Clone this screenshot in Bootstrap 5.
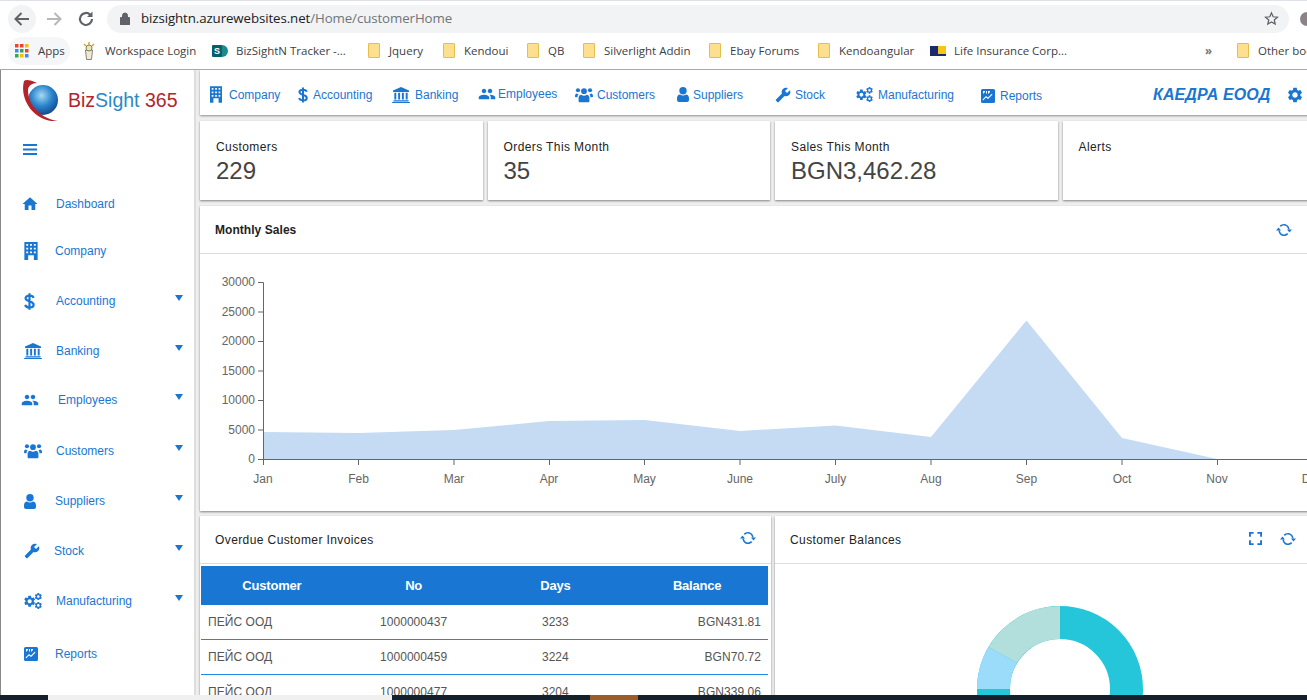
<!DOCTYPE html>
<html lang="en"><head><meta charset="utf-8"><title>BizSight 365</title>
<link href="https://cdn.jsdelivr.net/npm/bootstrap@5.3.0/dist/css/bootstrap.min.css" rel="stylesheet">
<style>
html,body{height:700px;overflow:hidden;background:#eee;font-family:"Liberation Sans",Arial,sans-serif;font-size:12px;color:#333}
.chrome-top{height:36px;background:#fff;padding-left:8px;border-top:1px solid #dee1e6;font-family:"Open Sans",sans-serif;color:#3c4043;overflow:hidden}
.back-btn{width:28px;height:28px;margin-right:7px;flex:none}
.fwd-btn{width:22px;height:22px;margin-right:10px;flex:none}
.reload-btn{width:22px;height:22px;margin-right:10px;flex:none}
.omni{width:1182px;flex:none;height:28px;border-radius:14px;background:#f1f3f4;padding-left:13px;font-size:13.3px;color:#70757a;letter-spacing:-.1px}
.omni b{font-weight:400;color:#202124}
.omni-txt{margin-left:11px}
.star-ic{margin-left:auto;margin-right:10px}
.avatar-dot{width:14px;height:14px;border-radius:50%;background:#8d8288;flex:none;margin-left:11px}
.chrome-marks{height:34px;background:#fff;border-bottom:1px solid #a8a8a8;padding:0 0 4px 8px;font-family:"Open Sans",sans-serif;font-size:11.5px;color:#3c4043;white-space:nowrap;overflow:hidden}
.apps-pill{width:62px;height:28px;margin-right:12px;flex:none;border-radius:14px;background:#f5f6f7;padding-left:7px;gap:9px}
.mark-it{display:flex;align-items:center;gap:9px;flex:none}
.mk-ws{width:130px;gap:9px}.mk-bz{width:156px;gap:8px}.mk-jq{width:75px}.mk-ke{width:84px}.mk-qb{width:56px}.mk-si{width:126px}.mk-eb{width:109px}.mk-ka{width:112px}.mk-li{width:275px;gap:8px}
.more-mk{width:32px;font-weight:700;color:#777;flex:none}
.fold{width:12px;height:15px;background:#fce08e;border:1px solid #e8bd4f;border-radius:1px;flex:none}
.app-shell{height:625px;overflow:hidden}
.side-rail{width:196px;flex:none;background:#fff;border-left:1px solid #888;border-right:2px solid #ddd;height:625px}
.logo-box{height:65px;padding:8px 0 0 19px}
.logo-txt{font-size:19.5px;margin-left:4px;color:#b5232b;margin-top:10px;line-height:24px;white-space:nowrap}
.logo-txt i{font-style:normal;color:#2a8ac6}
.burger{height:44px;padding-left:22px;padding-top:9px}
.burger svg{display:block}
.side-it{display:flex;align-items:center;color:#1976d2;text-decoration:none;padding-left:21px}
.side-it svg{fill:#1976d2;color:#1976d2}
.ico-slot{width:33px;flex:none;display:flex;align-items:center}
.ic-in{margin-left:2px}
.ic-out{margin-left:-1px}
.tri{margin-left:auto;margin-right:11px;margin-bottom:6px;width:0;height:0;border-left:4px solid transparent;border-right:4px solid transparent;border-top:6px solid #1976d2}
.it-dash{height:50px}.it-comp{height:44px}.it-acc{height:56px}.it-bank{height:44px}.it-emp{height:54px}.it-cust{height:48px}.it-supp{height:52px}.it-stock{height:48px}.it-manu{height:52px}.it-rep{height:54px}
.it-dash .lab,.it-acc .lab,.it-manu .lab{margin-left:2px}
.it-dash .lab{margin-left:1px}
.it-acc .lab,.it-manu .lab{margin-left:1px}
.it-bank .lab,.it-cust .lab{margin-left:1px}
.it-emp .lab{margin-left:3px}
.it-stock .lab{margin-left:-1px}
.main-pane{width:1145px;flex:none;margin-left:4px;height:625px}
.top-strip{height:45px;background:#fff;box-shadow:0 1px 2px rgba(0,0,0,.4);margin-bottom:6px;padding:4px 0 0 10px;color:#1976d2}
.top-it{display:flex;align-items:center;flex:none;text-decoration:none;color:#1976d2;white-space:nowrap}
.top-it svg{fill:#1976d2;color:#1976d2;flex:none}
.tp-comp{width:88px}.tp-comp svg{margin-right:7px;width:12px;height:17px}
.tp-acc{width:94px}.tp-acc svg{margin-right:5px;width:10px;height:16px}
.tp-bank{width:86px}.tp-bank svg{margin-right:5px;width:18px;height:16px}
.tp-emp{width:97px;margin-top:-2px}.tp-emp svg{margin-right:2px;width:18px;height:18px}
.tp-cust{width:102px}.tp-cust svg{margin-right:4px;width:18px;height:16px}
.tp-supp{width:98px}.tp-supp svg{margin-right:4px;width:12px;height:15px}
.tp-stock{width:81px}.tp-stock svg{margin-right:4px;width:16px;height:16px}
.tp-manu{width:125px}.tp-manu svg{margin-right:5px;width:17px;height:15px}
.tp-rep{width:172px;margin-top:2px}.tp-rep svg{margin-right:5px;width:14px;height:14px}
.co-name{font-size:16px;font-weight:700;font-style:italic;color:#1976d2;letter-spacing:.1px;white-space:nowrap}
.co-cog{width:18px;height:18px;margin-left:16px;fill:#1976d2;flex:none}
.stat-row{display:flex;gap:5px;margin-bottom:6px}
.stat-box{flex:1 1 0;height:79px;border:0;border-radius:0;box-shadow:0 1px 2px rgba(0,0,0,.45);padding:19px 16px 0}
.stat-lab{font-size:12px;color:#222;letter-spacing:.4px;line-height:14px}
.stat-val{font-size:24px;color:#444;line-height:30px;margin-top:2px}
.pane{border:0;border-radius:0;box-shadow:0 1px 2px rgba(0,0,0,.45);background:#fff}
.pane-head{height:48px;border-bottom:1px solid #ddd;padding:0 15px;background:#fff;font-size:12px;letter-spacing:.4px;color:#222;white-space:nowrap}
.pane-head svg{fill:#1976d2;flex:none}
.sales-title{letter-spacing:.05px}
.sales-sync{margin-left:980px;width:16px;height:14px}
.inv-sync{margin-left:auto;margin-top:-4px;width:16px;height:14px}
.bal-full{margin-left:347px;margin-top:-2px;width:13px;height:13px}
.bal-sync{margin-left:18px;margin-top:-2px;width:16px;height:14px}
.sales-pane{height:305px;margin-bottom:5px}
.low-row{display:flex;gap:4px}
.inv-pane{width:571px;height:200px;padding:0}
.bal-pane{width:570px;height:200px;overflow:hidden}
.inv-grid{width:567px;margin:2px 0 0 1px;font-size:12px;table-layout:fixed;margin-bottom:0}
.inv-grid th{background:#1976d2;color:#fff;height:39px;border:0;padding:1px 0 0;text-align:center;vertical-align:middle;font-size:13px;font-weight:700;letter-spacing:-.2px}
.inv-grid td{height:35px;border:0;border-bottom:1px solid #1e88e5;padding:0 7px;vertical-align:middle;color:#555;text-align:center;letter-spacing:.05px}
.inv-grid tbody tr:first-child td{height:34px}
.inv-grid td:first-child{text-align:left}
.inv-grid td:last-child{text-align:right}
.chart-txt{font-family:"Liberation Sans",Arial,sans-serif;font-size:12px;fill:#666}
.foot-strip{height:5px;background:#f0f0f0}
.foot-a{width:48px;background:#14202b}.foot-b{width:344px;background:#f0f0f0}.foot-c{width:198px;background:#14202b}.foot-d{width:48px;background:#9a5c28}.foot-e{flex:1;background:#14202b}
</style></head><body>
<svg width="0" height="0" class="d-block">
<defs>
<symbol id="i-building" viewBox="0 0 14 19"><path fill-rule="evenodd" d="M0 0h14v19H0zM2 2v2h2V2zm4 0v2h2V2zm4 0v2h2V2zM2 6v2h2V6zm4 0v2h2V6zm4 0v2h2V6zM2 10v2h2v-2zm4 0v2h2v-2zm4 0v2h2v-2zM4 14v5h6v-5z"/></symbol>
<symbol id="i-dollar" viewBox="0 0 12 18"><path fill="none" stroke="currentColor" stroke-width="2.4" d="M10.500 5C10 3.300 8.500 2.600 6 2.600 3.300 2.600 1.700 3.800 1.700 5.500c0 4 8.800 2.500 8.800 7 0 1.800-1.800 3-4.500 3-2.600 0-4.200-1-4.700-2.800M6 0v18"/></symbol>
<symbol id="i-bank" viewBox="0 0 20 18"><path d="M10 0l9 4v1.500H1V4zM2.500 6.500h2.200V14H2.500zm4.300 0H9V14H6.800zm4.200 0h2.200V14H11zm4.300 0h2.200V14h-2.200zM1.500 15h17v1.200h-17zM0 16.800h20V18H0z"/></symbol>
<symbol id="i-people" viewBox="0 0 24 24"><path d="M16 11c1.660 0 2.990-1.340 2.990-3S17.660 5 16 5c-1.660 0-3 1.340-3 3s1.340 3 3 3zm-8 0c1.660 0 2.990-1.340 2.990-3S9.660 5 8 5C6.340 5 5 6.340 5 8s1.340 3 3 3zm0 2c-2.330 0-7 1.170-7 3.500V19h14v-2.500c0-2.330-4.670-3.500-7-3.500zm8 0c-.29 0-.62.02-.97.05 1.160.84 1.970 1.970 1.970 3.450V19h6v-2.500c0-2.330-4.670-3.500-7-3.500z"/></symbol>
<symbol id="i-users" viewBox="0 0 20 17"><circle cx="10" cy="4.200" r="3.200"/><circle cx="3.300" cy="3.200" r="2.300"/><circle cx="16.700" cy="3.200" r="2.300"/><path d="M5 16.500a1 1 0 0 1-1-1v-4c0-2 1.500-3.300 3-3.300 1 .8 2 1 3 1s2-.2 3-1c1.500 0 3 1.300 3 3.300v4a1 1 0 0 1-1 1zM0 10c0-2 .8-3.300 2-3.300.6.500 1.200.7 2 .7-.8 1-1.200 2-1.200 3.600H1a1 1 0 0 1-1-1zM20 10c0-2-.8-3.300-2-3.300-.6.500-1.200.7-2 .7.800 1 1.200 2 1.200 3.600H19a1 1 0 0 0 1-1z"/></symbol>
<symbol id="i-person" viewBox="0 0 12 15"><circle cx="6" cy="3.700" r="3.700"/><path d="M2 15a2 2 0 0 1-2-2v-1.500c0-2.500 1.300-4 3-4 .8.600 1.900 1 3 1s2.200-.4 3-1c1.700 0 3 1.500 3 4V13a2 2 0 0 1-2 2z"/></symbol>
<symbol id="i-wrench" viewBox="0 0 24 24"><g transform="matrix(-1 0 0 1 24 0)"><path d="M22.700 19l-9.100-9.100c.9-2.300.4-5-1.500-6.900-2-2-5-2.400-7.400-1.300L9 6 6 9 1.600 4.700C.4 7.100.9 10.100 2.900 12.100c1.900 1.900 4.600 2.400 6.900 1.500l9.100 9.100c.4.400 1 .4 1.400 0l2.300-2.300c.5-.4.500-1.100.1-1.400z"/></g></symbol>
<symbol id="i-cog" viewBox="0 0 24 24"><path d="M19.140 12.940c.04-.3.06-.61.06-.94 0-.32-.02-.64-.07-.94l2.030-1.580c.18-.14.23-.41.12-.61l-1.920-3.320c-.12-.22-.37-.29-.59-.22l-2.390.96c-.5-.38-1.030-.7-1.620-.94l-.36-2.540c-.04-.24-.24-.41-.48-.41h-3.840c-.24 0-.43.17-.47.41l-.36 2.540c-.59.24-1.130.57-1.620.94l-2.390-.96c-.22-.08-.47 0-.59.22L2.740 8.870c-.12.21-.08.47.12.61l2.030 1.580c-.05.3-.09.63-.09.94s.02.64.07.94l-2.030 1.580c-.18.14-.23.41-.12.61l1.920 3.320c.12.22.37.29.59.22l2.390-.96c.5.38 1.030.7 1.620.94l.36 2.54c.05.24.24.41.48.41h3.840c.24 0 .44-.17.47-.41l.36-2.540c.59-.24 1.130-.56 1.620-.94l2.390.96c.22.08.47 0 .59-.22l1.920-3.320c.12-.22.07-.47-.12-.61l-2.010-1.580zM12 15.600c-1.980 0-3.600-1.620-3.600-3.600s1.620-3.600 3.600-3.600 3.600 1.620 3.600 3.600-1.620 3.600-3.600 3.600z"/></symbol>
<symbol id="i-cogs" viewBox="0 0 20 18"><use href="#i-cog" x="-1.500" y="1.500" width="15.500" height="15.500"/><use href="#i-cog" x="11" y="-1" width="10" height="10"/><use href="#i-cog" x="11" y="9" width="10" height="10"/></symbol>
<symbol id="i-report" viewBox="0 0 14 14"><path fill-rule="evenodd" d="M1.500 0h11A1.500 1.500 0 0 1 14 1.500v11a1.500 1.500 0 0 1-1.500 1.500h-11A1.500 1.500 0 0 1 0 12.500v-11A1.500 1.500 0 0 1 1.500 0zM2 2v2.500h1V3.500h1V2zm3 0v2.500h1V2zm2 0v2.500h1V3.500h1V2zm-5 9.500l3-3 2 1.500 4.500-4.500-.8-.8L7 8.500 5 7l-3.500 3.500z"/></symbol>
<symbol id="i-sync" viewBox="0 0 16 14"><path d="M13.600 6.200h-1.500C11.700 4 10 2.500 8 2.500c-1.200 0-2.300.5-3 1.400L3.700 2.700C4.800 1.600 6.300.9 8 .9c2.900 0 5.300 2.300 5.600 5.300zM2.400 7.800h1.500C4.300 10 6 11.500 8 11.500c1.200 0 2.300-.5 3-1.400l1.300 1.200c-1.100 1.100-2.600 1.800-4.300 1.800-2.900 0-5.300-2.300-5.600-5.300zM0 7.500h5L2.500 4.500zM11 6.500h5L13.500 9.500z"/></symbol>
<symbol id="i-full" viewBox="0 0 14 14"><path d="M0 0h5v2H2v3H0zM9 0h5v5h-2V2H9zM0 9h2v3h3v2H0zM12 9h2v5H9v-2h3z"/></symbol>
</defs></svg>

<div class="chrome-top d-flex align-items-center">
<svg class="back-btn" viewBox="0 0 28 28"><circle cx="14" cy="14" r="14" fill="#f1f3f4"/><path d="M21 14H8M13.500 8L7.500 14l6 6" fill="none" stroke="#5f6368" stroke-width="2"/></svg>
<svg class="fwd-btn" viewBox="0 0 22 22"><path d="M4 11h13M11.500 5l6 6-6 6" fill="none" stroke="#b5b7ba" stroke-width="2"/></svg>
<svg class="reload-btn" viewBox="0 0 22 22"><path d="M17 11a6 6 0 1 1-1.800-4.300" fill="none" stroke="#5f6368" stroke-width="2.200"/><path d="M17.500 3.500v5.500H12z" fill="#5f6368"/></svg>
<div class="omni d-flex align-items-center"><svg width="10" height="13" viewBox="0 0 10 13"><path d="M1 5.500h8a1 1 0 0 1 1 1V12a1 1 0 0 1-1 1H1a1 1 0 0 1-1-1V6.500a1 1 0 0 1 1-1zM2.500 5.500V3.500a2.500 2.500 0 0 1 5 0v2" fill="#5f6368" stroke="#5f6368"/></svg><span class="omni-txt"><b>bizsightn.azurewebsites.net</b>/Home/customerHome</span>
<svg class="star-ic" width="15" height="15" viewBox="0 0 24 24"><path d="M12 3l2.700 6.200 6.800.6-5.100 4.500 1.500 6.600L12 17.400 6.100 20.900l1.500-6.600L2.500 9.800l6.800-.6z" fill="none" stroke="#5f6368" stroke-width="2"/></svg></div>
<i class="avatar-dot"></i>
</div>
<div class="chrome-marks d-flex align-items-center">
<span class="apps-pill d-flex align-items-center"><svg width="14" height="14" viewBox="0 0 14 14" class="flex-shrink-0"><rect width="3.500" height="3.500" fill="#ea4335"/><rect x="5" width="3.500" height="3.500" fill="#ea4335"/><rect x="10" width="3.500" height="3.500" fill="#fbbc04"/><rect y="5" width="3.500" height="3.500" fill="#4285f4"/><rect x="5" y="5" width="3.500" height="3.500" fill="#34a853"/><rect x="10" y="5" width="3.500" height="3.500" fill="#ea4335"/><rect y="10" width="3.500" height="3.500" fill="#34a853"/><rect x="5" y="10" width="3.500" height="3.500" fill="#fbbc04"/><rect x="10" y="10" width="3.500" height="3.500" fill="#4285f4"/></svg>Apps</span>
<span class="mark-it mk-ws"><svg width="14" height="18" viewBox="0 0 14 18" class="flex-shrink-0"><path d="M3.500 8h7l-1 9.500h-5z" fill="#eee9da" stroke="#8b8470"/><circle cx="7" cy="6" r="3" fill="#e8e4c8" stroke="#7a8a3a"/><path d="M2 2l2 2M7 0v3M12 2l-2 2" stroke="#d9a441" stroke-width="1.500"/></svg>Workspace Login</span>
<span class="mark-it mk-bz"><svg width="16" height="16" viewBox="0 0 16 16" class="flex-shrink-0"><circle cx="10" cy="8" r="6" fill="#1b8a8f"/><rect y="2" width="10" height="12" rx="1" fill="#05606b"/><text x="5" y="11" text-anchor="middle" font-size="9" font-weight="700" font-family="Liberation Sans,sans-serif" fill="#fff">S</text></svg>BizSightN Tracker -...</span>
<span class="mark-it mk-jq"><i class="fold"></i>Jquery</span>
<span class="mark-it mk-ke"><i class="fold"></i>Kendoui</span>
<span class="mark-it mk-qb"><i class="fold"></i>QB</span>
<span class="mark-it mk-si"><i class="fold"></i>Silverlight Addin</span>
<span class="mark-it mk-eb"><i class="fold"></i>Ebay Forums</span>
<span class="mark-it mk-ka"><i class="fold"></i>Kendoangular</span>
<span class="mark-it mk-li"><svg width="16" height="10" viewBox="0 0 16 10" class="flex-shrink-0"><rect width="16" height="10" fill="#1a2a6c"/><rect x="8" width="8" height="8" fill="#f5c518"/></svg>Life Insurance Corp...</span>
<span class="more-mk">»</span>
<span class="mark-it"><i class="fold"></i>Other bookmarks</span>
</div>

<div class="app-shell d-flex">
<aside class="side-rail">
<div class="logo-box d-flex">
<svg width="44" height="48" viewBox="20 78 44 48" class="flex-shrink-0"><defs><radialGradient id="gl" cx=".45" cy=".35" r=".7"><stop offset="0" stop-color="#a7d8f5"/><stop offset=".5" stop-color="#2a86cc"/><stop offset="1" stop-color="#123f86"/></radialGradient></defs><circle cx="43" cy="100" r="15" fill="url(#gl)"/><path d="M24 81C19 100 35 123 58 121C42 119 28 106 28 90C28 86 32 83 37 83C31 80 26 79 24 81Z" fill="#b5232b"/></svg>
<div class="logo-txt">Biz<i>Sight</i> 365</div>
</div>
<div class="burger"><svg width="14" height="11" viewBox="0 0 14 11"><path d="M0 0h14v2H0zM0 4.500h14v2H0zM0 9h14v2H0z" fill="#1976d2"/></svg></div>
<a class="side-it it-dash"><span class="ico-slot"><svg width="18" height="18" viewBox="0 0 24 24" class="ic-out"><path d="M10 20v-6h4v6h5v-8h3L12 3 2 12h3v8z"/></svg></span><span class="lab">Dashboard</span></a>
<a class="side-it it-comp"><span class="ico-slot"><svg width="14" height="18" class="ic-in"><use href="#i-building"/></svg></span><span class="lab">Company</span></a>
<a class="side-it it-acc"><span class="ico-slot"><svg width="11" height="17" class="ic-in"><use href="#i-dollar"/></svg></span><span class="lab">Accounting</span><i class="tri"></i></a>
<a class="side-it it-bank"><span class="ico-slot"><svg width="18" height="16" class="ic-in"><use href="#i-bank"/></svg></span><span class="lab">Banking</span><i class="tri"></i></a>
<a class="side-it it-emp"><span class="ico-slot"><svg width="18" height="18" viewBox="0 0 24 24" class="ic-out"><use href="#i-people"/></svg></span><span class="lab">Employees</span><i class="tri"></i></a>
<a class="side-it it-cust"><span class="ico-slot"><svg width="18" height="16" class="ic-in"><use href="#i-users"/></svg></span><span class="lab">Customers</span><i class="tri"></i></a>
<a class="side-it it-supp"><span class="ico-slot"><svg width="12" height="15" class="ic-in"><use href="#i-person"/></svg></span><span class="lab">Suppliers</span><i class="tri"></i></a>
<a class="side-it it-stock"><span class="ico-slot"><svg width="16" height="16" viewBox="0 0 24 24" class="ic-in"><use href="#i-wrench"/></svg></span><span class="lab">Stock</span><i class="tri"></i></a>
<a class="side-it it-manu"><span class="ico-slot"><svg width="18" height="16" class="ic-in"><use href="#i-cogs"/></svg></span><span class="lab">Manufacturing</span><i class="tri"></i></a>
<a class="side-it it-rep"><span class="ico-slot"><svg width="14" height="14" class="ic-in"><use href="#i-report"/></svg></span><span class="lab">Reports</span></a>
</aside>
<main class="main-pane">
<nav class="top-strip d-flex align-items-center">
<a class="top-it tp-comp"><svg><use href="#i-building"/></svg>Company</a>
<a class="top-it tp-acc"><svg><use href="#i-dollar"/></svg>Accounting</a>
<a class="top-it tp-bank"><svg><use href="#i-bank"/></svg>Banking</a>
<a class="top-it tp-emp"><svg viewBox="0 0 24 24"><use href="#i-people"/></svg>Employees</a>
<a class="top-it tp-cust"><svg><use href="#i-users"/></svg>Customers</a>
<a class="top-it tp-supp"><svg><use href="#i-person"/></svg>Suppliers</a>
<a class="top-it tp-stock"><svg viewBox="0 0 24 24"><use href="#i-wrench"/></svg>Stock</a>
<a class="top-it tp-manu"><svg><use href="#i-cogs"/></svg>Manufacturing</a>
<a class="top-it tp-rep"><svg><use href="#i-report"/></svg>Reports</a>
<span class="co-name">КАЕДРА ЕООД</span>
<svg class="co-cog" viewBox="0 0 24 24"><use href="#i-cog"/></svg>
</nav>
<section class="stat-row">
<div class="card stat-box"><div class="stat-lab">Customers</div><div class="stat-val">229</div></div>
<div class="card stat-box"><div class="stat-lab">Orders This Month</div><div class="stat-val">35</div></div>
<div class="card stat-box"><div class="stat-lab">Sales This Month</div><div class="stat-val">BGN3,462.28</div></div>
<div class="card stat-box"><div class="stat-lab">Alerts</div></div>
</section>
<section class="card pane sales-pane">
<div class="pane-head d-flex align-items-center fw-bold"><span class="sales-title">Monthly Sales</span><svg class="sales-sync"><use href="#i-sync"/></svg></div>
<svg width="1145" height="257" viewBox="200 254 1145 257" class="d-block">
<path d="M263 432L358.500 433L454 430L549 421L644.500 420L740 431L835.500 425.500L931 437L1026.500 320.500L1122 438L1217 459L1345 459.500L263 459.500Z" fill="#c5daf3"/>
<g stroke="#666" fill="none"><path d="M258 282.500H263.500V459.500"/><path d="M263 459.500H1345"/>
<path d="M258 312H263M258 341.500H263M258 371H263M258 400.500H263M258 430H263M258 459.500H263"/>
<path d="M263.500 460V465M358.500 460V465M454 460V465M549.500 460V465M644.500 460V465M740 460V465M835.500 460V465M931 460V465M1026.500 460V465M1122 460V465M1217.500 460V465M1312.500 460V465"/></g>
<g class="chart-txt" text-anchor="end"><text x="255" y="286">30000</text><text x="255" y="316">25000</text><text x="255" y="345">20000</text><text x="255" y="375">15000</text><text x="255" y="404">10000</text><text x="255" y="434">5000</text><text x="255" y="463">0</text></g>
<g class="chart-txt" text-anchor="middle"><text x="263" y="483">Jan</text><text x="358.500" y="483">Feb</text><text x="454" y="483">Mar</text><text x="549" y="483">Apr</text><text x="644.500" y="483">May</text><text x="740" y="483">June</text><text x="835.500" y="483">July</text><text x="931" y="483">Aug</text><text x="1026.500" y="483">Sep</text><text x="1122" y="483">Oct</text><text x="1217" y="483">Nov</text><text x="1312.500" y="483">Dec</text></g>
</svg>
</section>
<section class="low-row">
<div class="card pane inv-pane">
<div class="pane-head d-flex align-items-center"><span>Overdue Customer Invoices</span><svg class="inv-sync"><use href="#i-sync"/></svg></div>
<table class="table inv-grid"><thead><tr><th>Customer</th><th>No</th><th>Days</th><th>Balance</th></tr></thead>
<tbody><tr><td>ПЕЙС ООД</td><td>1000000437</td><td>3233</td><td>BGN431.81</td></tr>
<tr><td>ПЕЙС ООД</td><td>1000000459</td><td>3224</td><td>BGN70.72</td></tr>
<tr><td>ПЕЙС ООД</td><td>1000000477</td><td>3204</td><td>BGN339.06</td></tr></tbody></table>
</div>
<div class="card pane bal-pane">
<div class="pane-head d-flex align-items-center"><span>Customer Balances</span><svg class="bal-full"><use href="#i-full"/></svg><svg class="bal-sync"><use href="#i-sync"/></svg></div>
<svg width="570" height="152" viewBox="775 564 570 152" class="d-block">
<circle cx="1060" cy="689" r="66.500" fill="none" stroke="#26c6da" stroke-width="33"/>
<path d="M1060 606A83 83 0 0 0 988.400 647L1017 663A50 50 0 0 1 1060 639Z" fill="#b2dfdb"/>
<path d="M988.400 647A83 83 0 0 0 977 689H1010A50 50 0 0 1 1017 663Z" fill="#9bdcfb"/>
</svg>
</div>
</section>
</main>
</div>
<div class="foot-strip d-flex"><div class="foot-a"></div><div class="foot-b"></div><div class="foot-c"></div><div class="foot-d"></div><div class="foot-e"></div></div>
<script src="https://cdn.jsdelivr.net/npm/bootstrap@5.3.0/dist/js/bootstrap.bundle.min.js"></script>
</body></html>
